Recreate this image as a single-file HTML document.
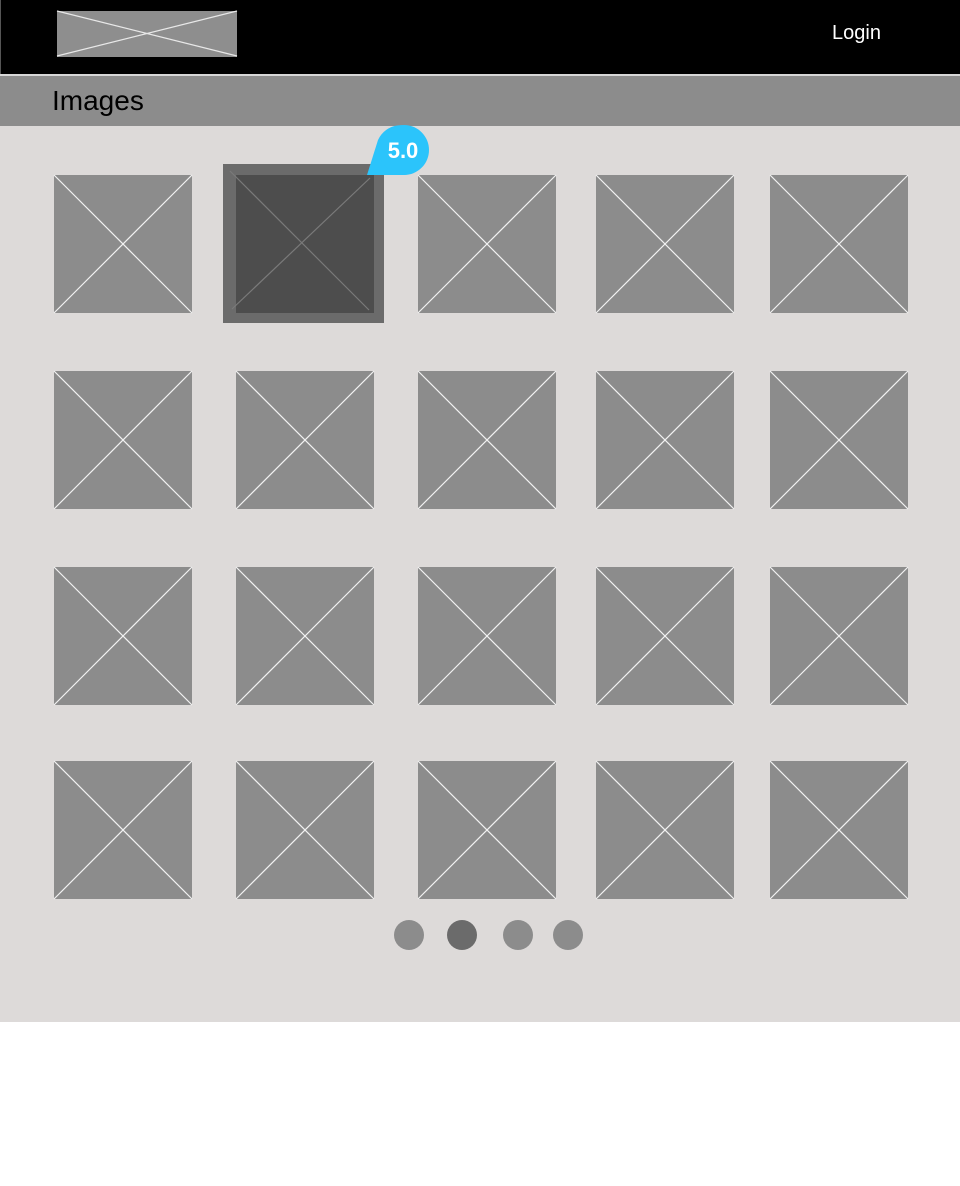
<!DOCTYPE html>
<html><head><meta charset="utf-8"><style>
html,body{margin:0;padding:0;background:#fff;}
svg{display:block;}
text{font-family:"Liberation Sans",sans-serif;}
</style></head><body>
<svg width="960" height="1186" viewBox="0 0 960 1186" xmlns="http://www.w3.org/2000/svg">
<defs>
<g id="t">
<rect x="0" y="0" width="138" height="138" fill="#8c8c8c"/>
<line x1="0" y1="0" x2="138" y2="138" stroke="#f2f2f2" stroke-width="1.2"/>
<line x1="0" y1="138" x2="138" y2="0" stroke="#f2f2f2" stroke-width="1.2"/>
</g>
</defs>
<rect x="0" y="0" width="960" height="1186" fill="#fff"/>
<rect x="0" y="0" width="960" height="74" fill="#000"/>
<rect x="0" y="0" width="1" height="74" fill="#555"/>
<rect x="0" y="74" width="960" height="2" fill="#d8d8d8"/>
<rect x="57" y="11" width="180" height="46" fill="#8e8e8e"/>
<g stroke="#e8e8e8" stroke-width="1.2"><line x1="57" y1="11" x2="237" y2="56"/><line x1="57" y1="56" x2="237" y2="11"/></g>
<text x="832" y="39" fill="#fff" font-size="20">Login</text>
<rect x="0" y="76" width="960" height="50" fill="#8c8c8c"/>
<text x="52" y="110" fill="#000" font-size="28">Images</text>
<rect x="0" y="126" width="960" height="896" fill="#dddad9"/>
<rect x="223" y="164" width="161" height="159" fill="#6b6b6b"/>
<rect x="236" y="175" width="138" height="138" fill="#4d4d4d"/>
<g stroke="#7a7a7a" stroke-width="1.2"><line x1="230" y1="171" x2="369" y2="310"/><line x1="232" y1="309" x2="370" y2="178"/></g>

<use href="#t" x="54" y="175"/><use href="#t" x="418" y="175"/><use href="#t" x="596" y="175"/><use href="#t" x="770" y="175"/>
<use href="#t" x="54" y="371"/><use href="#t" x="236" y="371"/><use href="#t" x="418" y="371"/><use href="#t" x="596" y="371"/><use href="#t" x="770" y="371"/>
<use href="#t" x="54" y="567"/><use href="#t" x="236" y="567"/><use href="#t" x="418" y="567"/><use href="#t" x="596" y="567"/><use href="#t" x="770" y="567"/>
<use href="#t" x="54" y="761"/><use href="#t" x="236" y="761"/><use href="#t" x="418" y="761"/><use href="#t" x="596" y="761"/><use href="#t" x="770" y="761"/>

<path d="M367 175 L378 140 A25 25 0 1 1 404 175 Z" fill="#2bc4fb"/>
<circle cx="404" cy="150" r="25" fill="#2bc4fb"/>
<text x="403" y="158" fill="#fff" font-size="22" font-weight="bold" text-anchor="middle">5.0</text>
<circle cx="409" cy="935" r="15" fill="#8c8c8c"/>
<circle cx="462" cy="935" r="15" fill="#6b6b6b"/>
<circle cx="518" cy="935" r="15" fill="#8c8c8c"/>
<circle cx="568" cy="935" r="15" fill="#8c8c8c"/>
</svg>
</body></html>
